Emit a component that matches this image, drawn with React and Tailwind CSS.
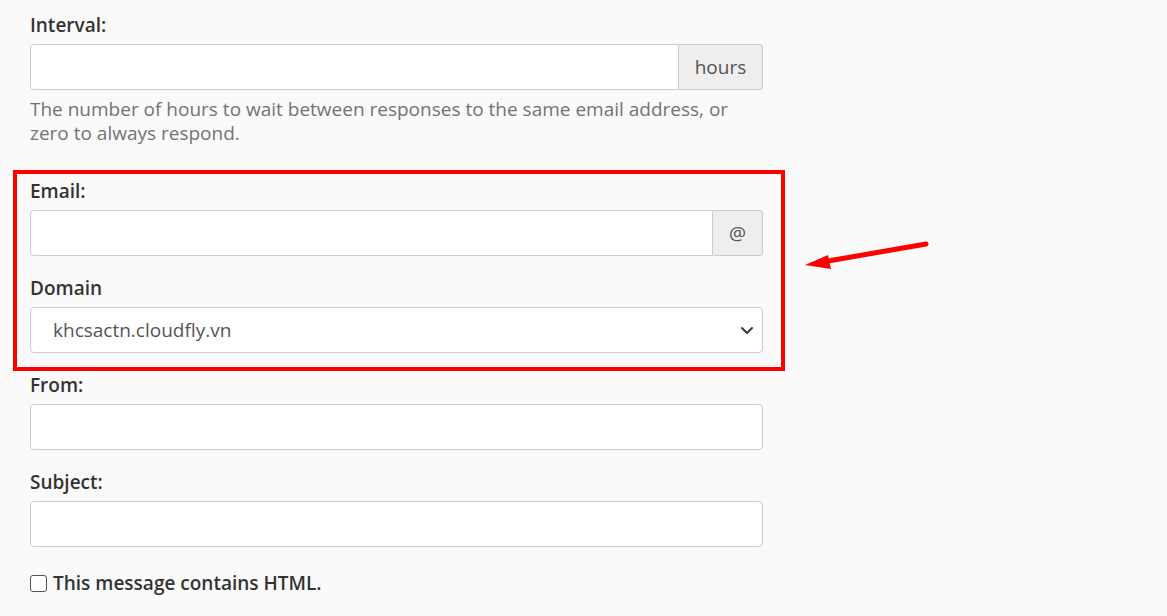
import React from "react";

const Label = ({ children, className = "" }) => (
  <label className={`block text-[19px] leading-[28px] font-semibold text-[#333] mb-[5px] ${className}`}>
    {children}
  </label>
);

const TextInput = () => (
  <input
    type="text"
    className="block w-full h-[46px] bg-white border border-[#ccc] rounded-[4px] px-3 outline-none"
  />
);

const InputGroup = ({ addon, addonWidth }) => (
  <div className="flex h-[46px]">
    <input
      type="text"
      className="flex-1 min-w-0 bg-white border border-[#ccc] rounded-l-[4px] px-3 outline-none"
    />
    <span
      className={`${addonWidth} flex items-center justify-center bg-[#eee] border border-l-0 border-[#ccc] rounded-r-[4px] text-[19px] text-[#555]`}
    >
      {addon}
    </span>
  </div>
);

const App = () => {
  return (
    <div
      className="relative min-h-[616px] bg-[#fafafa] pt-[11px] pl-[30px]"
      style={{ fontFamily: '"Open Sans", "Noto Sans", sans-serif' }}
    >
      <div className="w-[733px]">
        <Label>Interval:</Label>
        <InputGroup addon="hours" addonWidth="w-[84px]" />
        <p className="mt-[7px] text-[19px] leading-[24px] text-[#737373]">
          The number of hours to wait between responses to the same email address, or zero to always respond.
        </p>

        {/* highlighted block */}
        <div className="mt-[25px] -ml-[17px] -mr-[22px] border-4 border-[#ff0000] pl-[13px] pr-[18px] pt-[3px] pb-[14px]">
          <Label>Email:</Label>
          <InputGroup addon="@" addonWidth="w-[50px]" />
          <Label className="mt-[18px]">Domain</Label>
          <div className="relative h-[46px] bg-white border border-[#ccc] rounded-[4px] flex items-center pl-[22px]">
            <span className="text-[19px] text-[#555]">khcsactn.cloudfly.vn</span>
            <svg
              className="absolute right-[8px] top-1/2 -translate-y-1/2"
              width="14"
              height="10"
              viewBox="0 0 14 10"
            >
              <path d="M2 3 L7 8 L12 3" fill="none" stroke="#343a40" strokeWidth="2" strokeLinecap="round" strokeLinejoin="round" />
            </svg>
          </div>
        </div>

        <Label>From:</Label>
        <TextInput />
        <Label className="mt-[18px]">Subject:</Label>
        <TextInput />

        <label className="mt-[23px] flex items-center text-[19px] leading-[27px] font-semibold text-[#333]">
          <span className="w-[17px] h-[17px] border border-[#555] rounded-[3px] bg-white mr-[6px]" />
          This message contains HTML.
        </label>
      </div>

      <svg className="absolute left-0 top-0 pointer-events-none" width="1167" height="616">
        <line x1="828" y1="261" x2="926" y2="244" stroke="#ff0000" strokeWidth="5" strokeLinecap="round" />
        <polygon points="805,265 828,255 831,269" fill="#ff0000" />
      </svg>
    </div>
  );
};

export default App;
